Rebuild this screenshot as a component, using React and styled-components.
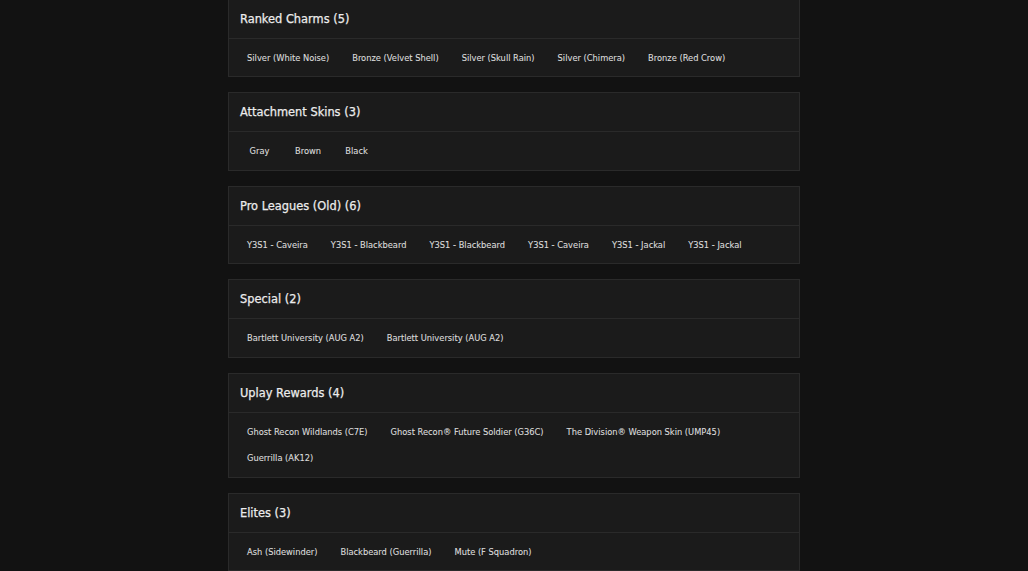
import React from "react";
import styled, { createGlobalStyle } from "styled-components";

const sections = [
  {
    title: "Ranked Charms",
    items: [
      "Silver (White Noise)",
      "Bronze (Velvet Shell)",
      "Silver (Skull Rain)",
      "Silver (Chimera)",
      "Bronze (Red Crow)",
    ],
  },
  { title: "Attachment Skins", items: ["Gray", "Brown", "Black"] },
  {
    title: "Pro Leagues (Old)",
    items: [
      "Y3S1 - Caveira",
      "Y3S1 - Blackbeard",
      "Y3S1 - Blackbeard",
      "Y3S1 - Caveira",
      "Y3S1 - Jackal",
      "Y3S1 - Jackal",
    ],
  },
  {
    title: "Special",
    items: ["Bartlett University (AUG A2)", "Bartlett University (AUG A2)"],
  },
  {
    title: "Uplay Rewards",
    items: [
      "Ghost Recon Wildlands (C7E)",
      "Ghost Recon® Future Soldier (G36C)",
      "The Division® Weapon Skin (UMP45)",
      "Guerrilla (AK12)",
    ],
  },
  {
    title: "Elites",
    items: ["Ash (Sidewinder)", "Blackbeard (Guerrilla)", "Mute (F Squadron)"],
  },
];

const GlobalStyle = createGlobalStyle`
  html, body {
    margin: 0;
    background: #121212;
    font-family: "DejaVu Sans", Inter, sans-serif;
    overflow: hidden;
  }
`;

const List = styled.main`
  width: 572px;
  margin: -1.5px auto 0;
  display: flex;
  flex-direction: column;
  gap: 15px;
`;

const Card = styled.section`
  background: #1b1b1b;
  border: 1px solid #2a2a2a;
`;

const CardHeader = styled.h2`
  margin: 0;
  height: 38px;
  padding: 0 11px;
  display: flex;
  align-items: center;
  border-bottom: 1px solid #2a2a2a;
  font-size: 11.4px;
  font-weight: 400;
  -webkit-text-stroke: 0.25px #ececec;
  color: #ececec;
`;

const CardBody = styled.div`
  padding: 6px 11px 5px;
  display: flex;
  flex-wrap: wrap;
  column-gap: 9px;
`;

const Item = styled.button`
  height: 26.5px;
  min-width: 39px;
  padding: 0 7px;
  background: transparent;
  border: none;
  font-family: inherit;
  font-size: 8.3px;
  font-weight: 400;
  -webkit-text-stroke: 0.1px #dcdcdc;
  color: #dcdcdc;
  cursor: pointer;
  white-space: nowrap;
`;

export default function App() {
  return (
    <>
      <GlobalStyle />
      <List>
        {sections.map((section) => (
          <Card key={section.title}>
            <CardHeader>
              {section.title} ({section.items.length})
            </CardHeader>
            <CardBody>
              {section.items.map((item, index) => (
                <Item key={index}>{item}</Item>
              ))}
            </CardBody>
          </Card>
        ))}
      </List>
    </>
  );
}
